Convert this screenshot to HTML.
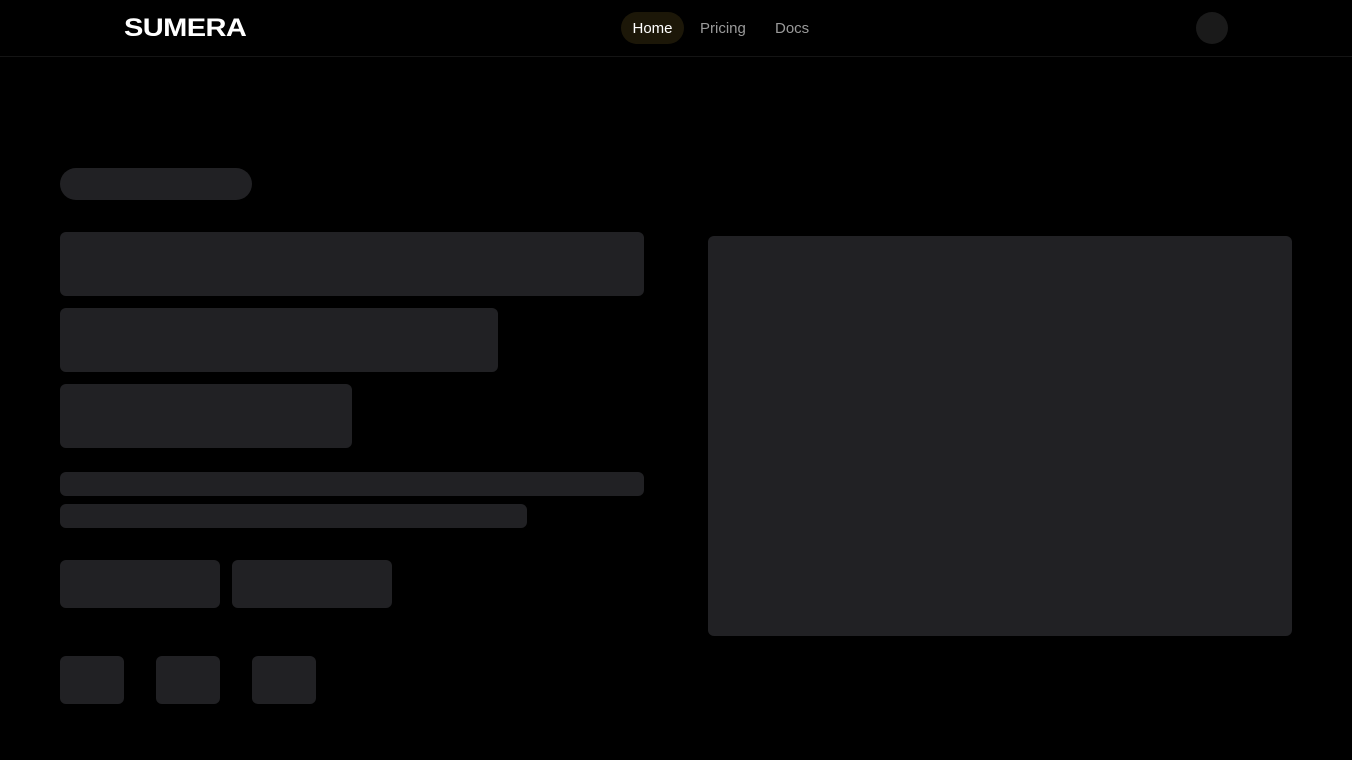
<!DOCTYPE html>
<html><head><style>
*{margin:0;padding:0;box-sizing:border-box}
body{width:1352px;height:760px;background:#000;position:relative;overflow:hidden;font-family:"Liberation Sans",sans-serif}
.h{position:absolute;left:0;top:0;width:1352px;height:57px;border-bottom:1px solid #141414}
.logo{position:absolute;left:124px;top:14px;color:#fff;font-weight:bold;font-size:25px;letter-spacing:-0.5px;transform:scaleX(1.16);transform-origin:left center}
.nav{position:absolute;top:12px;height:32px;line-height:33px;font-size:15px;color:#9a9a9a}
.b{position:absolute;background:#212124}
</style></head><body>
<div class="h">
<div class="logo">SUMERA</div>
<div class="nav" style="left:621px;width:63px;border-radius:16px;background:#1c1708;color:#fff;text-align:center">Home</div>
<div class="nav" style="left:700px">Pricing</div>
<div class="nav" style="left:775px">Docs</div>
<div style="position:absolute;left:1196px;top:12px;width:32px;height:32px;border-radius:50%;background:#1a1a1a"></div>
</div>
<div class="b" style="left:60px;top:168px;width:192px;height:32px;border-radius:16px"></div>
<div class="b" style="left:60px;top:232px;width:584px;height:64px;border-radius:6px"></div>
<div class="b" style="left:60px;top:308px;width:438px;height:64px;border-radius:6px"></div>
<div class="b" style="left:60px;top:384px;width:292px;height:64px;border-radius:6px"></div>
<div class="b" style="left:60px;top:472px;width:584px;height:24px;border-radius:6px"></div>
<div class="b" style="left:60px;top:504px;width:467px;height:24px;border-radius:6px"></div>
<div class="b" style="left:60px;top:560px;width:160px;height:48px;border-radius:6px"></div>
<div class="b" style="left:232px;top:560px;width:160px;height:48px;border-radius:6px"></div>
<div class="b" style="left:60px;top:656px;width:64px;height:48px;border-radius:6px"></div>
<div class="b" style="left:156px;top:656px;width:64px;height:48px;border-radius:6px"></div>
<div class="b" style="left:252px;top:656px;width:64px;height:48px;border-radius:6px"></div>
<div class="b" style="left:708px;top:236px;width:584px;height:400px;border-radius:6px"></div>
</body></html>
